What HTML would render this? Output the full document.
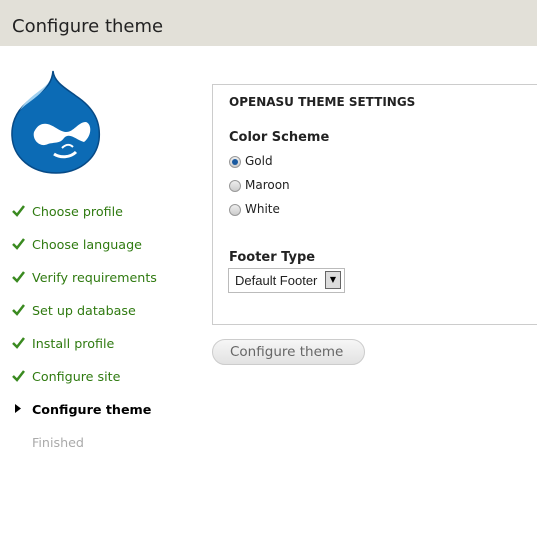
<!DOCTYPE html>
<html><head><style>
body{margin:0;width:537px;height:541px;background:#fff;font-family:"DejaVu Sans",Verdana,sans-serif;position:relative;overflow:hidden}
.hd{position:absolute;left:0;top:0;width:537px;height:46px;background:#e2e0d8}
.hd h1{margin:0;position:absolute;left:12px;top:16px;font-size:18px;font-weight:normal;color:#222}
.t{position:absolute;font-size:12.5px;white-space:nowrap}
.step{position:absolute;left:32px;font-size:12.7px;color:#2f7a10;white-space:nowrap}
.ck{position:absolute;left:12px}
.fs{position:absolute;left:212px;top:84px;width:340px;height:239px;border:1px solid #ccc}
.rad{position:absolute;left:229px;width:10px;height:10px;border-radius:50%;border:1px solid #999;background:linear-gradient(#eee,#ccc)}
</style></head><body>
<div class="hd"><h1>Configure theme</h1></div>
<svg style="position:absolute;left:10px;top:70px" width="92" height="104" viewBox="0 0 92 104">
<path d="M43 1 C44 12 55 18 66 26 C84 38 91 52 89 70 C86 90 68 103 46 103 C22 103 3 88 2 66 C1 45 14 33 28 24 C37 18 42 12 43 1Z" fill="#0c6bb5" stroke="#074a86" stroke-width="1.5"/>
<path d="M40 10 C35 20 20 24 10 40 C20 30 32 26 40 10Z" fill="#9fd0f0"/>
<path d="M30 55 C40 50 48 62 56 62 C64 62 68 52 76 52 C82 54 82 66 74 72 C66 70 60 62 54 68 C50 74 44 72 38 74 C30 78 22 70 24 62 C26 58 28 56 30 55Z" fill="#fff"/>
<path d="M44 84 C50 88 60 88 66 82" stroke="#fff" stroke-width="3" fill="none"/>
<path d="M52 78 C56 74 60 74 63 77" stroke="#fff" stroke-width="2" fill="none"/>
</svg>
<svg class="ck" style="top:205px" width="13" height="12" viewBox="0 0 13 12"><path d="M1 6 L5 10 L12 1" stroke="#3a8a20" stroke-width="2.5" fill="none"/></svg>
<svg class="ck" style="top:238px" width="13" height="12" viewBox="0 0 13 12"><path d="M1 6 L5 10 L12 1" stroke="#3a8a20" stroke-width="2.5" fill="none"/></svg>
<svg class="ck" style="top:271px" width="13" height="12" viewBox="0 0 13 12"><path d="M1 6 L5 10 L12 1" stroke="#3a8a20" stroke-width="2.5" fill="none"/></svg>
<svg class="ck" style="top:304px" width="13" height="12" viewBox="0 0 13 12"><path d="M1 6 L5 10 L12 1" stroke="#3a8a20" stroke-width="2.5" fill="none"/></svg>
<svg class="ck" style="top:337px" width="13" height="12" viewBox="0 0 13 12"><path d="M1 6 L5 10 L12 1" stroke="#3a8a20" stroke-width="2.5" fill="none"/></svg>
<svg class="ck" style="top:370px" width="13" height="12" viewBox="0 0 13 12"><path d="M1 6 L5 10 L12 1" stroke="#3a8a20" stroke-width="2.5" fill="none"/></svg>
<svg class="ck" style="top:404px;left:15px" width="7" height="9" viewBox="0 0 7 9"><path d="M0 0 L6 4.5 L0 9Z" fill="#000"/></svg>
<div class="step" style="top:204px">Choose profile</div>
<div class="step" style="top:237px">Choose language</div>
<div class="step" style="top:270px">Verify requirements</div>
<div class="step" style="top:303px">Set up database</div>
<div class="step" style="top:336px">Install profile</div>
<div class="step" style="top:369px">Configure site</div>
<div class="step" style="top:402px;color:#000;font-weight:bold">Configure theme</div>
<div class="step" style="top:435px;color:#aaa">Finished</div>
<div class="fs"></div>
<div class="t" style="left:229px;top:95px;font-weight:bold;font-size:12px;color:#222">OPENASU THEME SETTINGS</div>
<div class="t" style="left:229px;top:130px;font-weight:bold;font-size:13px;color:#222">Color Scheme</div>
<div class="rad" style="top:156px"><div style="margin:2px;width:6px;height:6px;border-radius:50%;background:#1a5aa0"></div></div>
<div class="t" style="left:245px;top:154px;font-size:12px;color:#222">Gold</div>
<div class="rad" style="top:180px"></div>
<div class="t" style="left:245px;top:178px;font-size:12px;color:#222">Maroon</div>
<div class="rad" style="top:204px"></div>
<div class="t" style="left:245px;top:202px;font-size:12px;color:#222">White</div>
<div class="t" style="left:229px;top:250px;font-weight:bold;font-size:13px;color:#222">Footer Type</div>
<div style="position:absolute;left:228px;top:268px;width:115px;height:23px;border:1px solid #bbb;background:#fff"></div>
<div class="t" style="left:235px;top:273px;font-family:'Liberation Sans',Arial,sans-serif;font-size:13px;color:#222">Default Footer</div>
<div style="position:absolute;left:325px;top:271px;width:14px;height:16px;border:1px solid #666;background:#ddd;font-size:8px;text-align:center;line-height:16px">▼</div>
<div style="position:absolute;left:212px;top:339px;width:151px;height:24px;border:1px solid #ccc;border-radius:13px;background:linear-gradient(#f6f6f6,#e2e2e2)"></div>
<div class="t" style="left:230px;top:344px;font-size:13.5px;color:#666">Configure theme</div>
</body></html>
